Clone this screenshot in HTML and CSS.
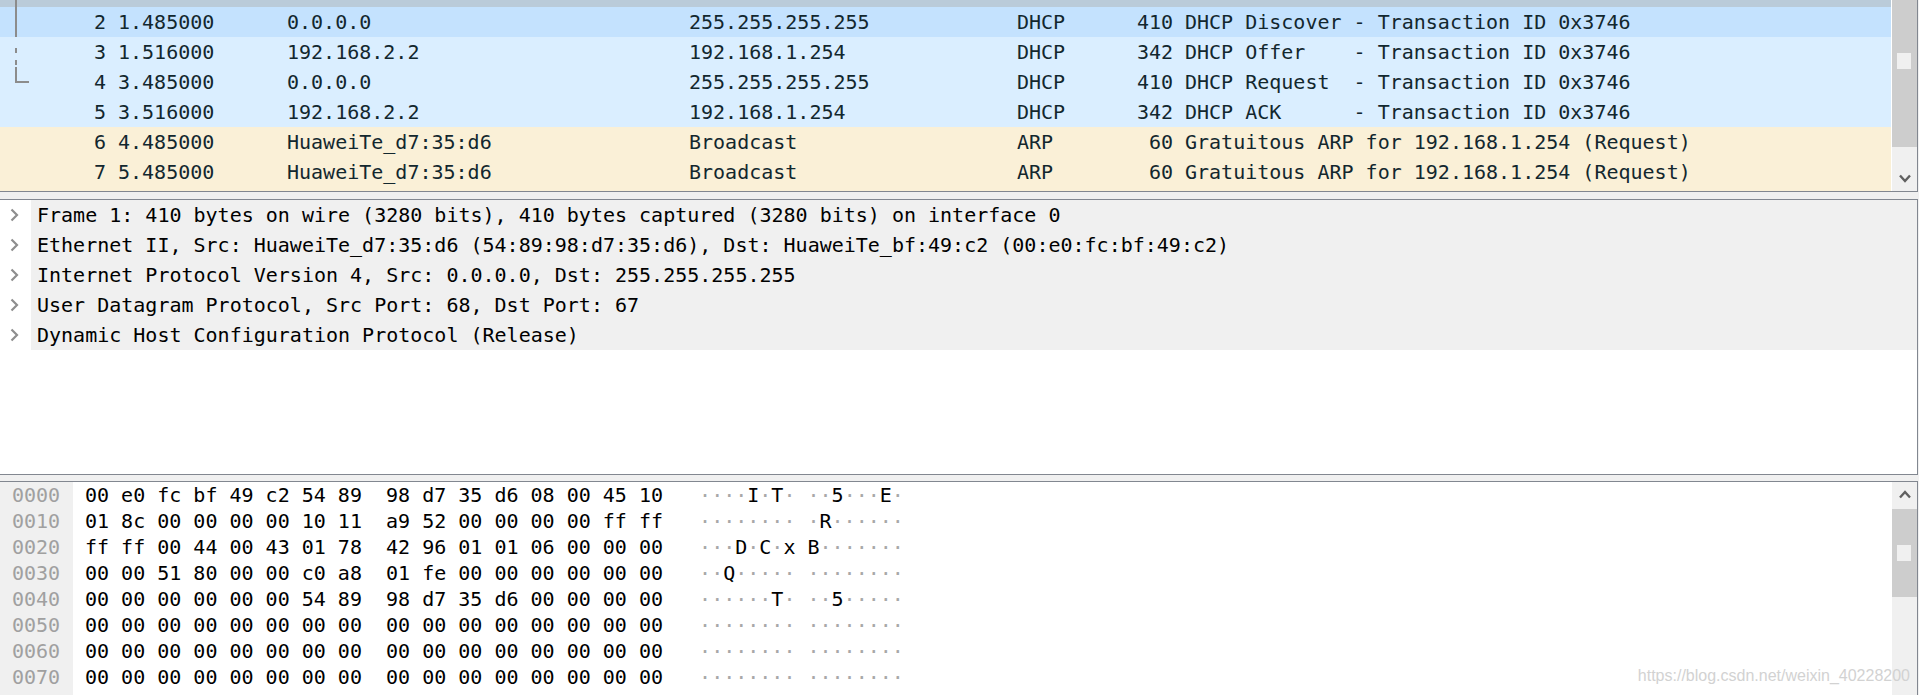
FILE: index.html
```html
<!DOCTYPE html>
<html lang="en">
<head>
    <meta charset="UTF-8">
    <title>Wireshark - DHCP</title>
    <link rel="stylesheet" href="styles.css">
</head>
<body>
    <div class="pane list">
        <div class="rows">
            <div class="strip"></div>
            <div class="row udp hover"><span class="no">2</span><span class="time">1.485000</span><span class="src">0.0.0.0</span><span class="dst">255.255.255.255</span><span class="proto">DHCP</span><span class="len">410</span><span class="info">DHCP Discover - Transaction ID 0x3746</span></div>
            <div class="row udp"><span class="no">3</span><span class="time">1.516000</span><span class="src">192.168.2.2</span><span class="dst">192.168.1.254</span><span class="proto">DHCP</span><span class="len">342</span><span class="info">DHCP Offer    - Transaction ID 0x3746</span></div>
            <div class="row udp"><span class="no">4</span><span class="time">3.485000</span><span class="src">0.0.0.0</span><span class="dst">255.255.255.255</span><span class="proto">DHCP</span><span class="len">410</span><span class="info">DHCP Request  - Transaction ID 0x3746</span></div>
            <div class="row udp"><span class="no">5</span><span class="time">3.516000</span><span class="src">192.168.2.2</span><span class="dst">192.168.1.254</span><span class="proto">DHCP</span><span class="len">342</span><span class="info">DHCP ACK      - Transaction ID 0x3746</span></div>
            <div class="row arp"><span class="no">6</span><span class="time">4.485000</span><span class="src">HuaweiTe_d7:35:d6</span><span class="dst">Broadcast</span><span class="proto">ARP</span><span class="len">60</span><span class="info">Gratuitous ARP for 192.168.1.254 (Request)</span></div>
            <div class="row arp"><span class="no">7</span><span class="time">5.485000</span><span class="src">HuaweiTe_d7:35:d6</span><span class="dst">Broadcast</span><span class="proto">ARP</span><span class="len">60</span><span class="info">Gratuitous ARP for 192.168.1.254 (Request)</span></div>
            <div class="fill"></div>
        </div>
        <div class="vscroll">
            <div class="thumb big"><div class="grip"></div></div>
            <div class="track">
                <svg class="arrow" width="12" height="9" viewBox="0 0 12 9"><polyline points="1,1.5 6,7 11,1.5" fill="none" stroke="#606060" stroke-width="2.4"/></svg>
            </div>
        </div>
        <!-- related packet marks -->
        <svg class="related" width="32" height="90" viewBox="0 0 32 90">
            <rect x="15" y="0" width="2" height="37" fill="#8c8c8c"/>
            <rect x="15" y="48" width="2" height="5" fill="#8c8c8c"/>
            <rect x="15" y="60" width="2" height="5" fill="#8c8c8c"/>
            <rect x="15" y="67" width="2" height="16" fill="#8c8c8c"/>
            <rect x="15" y="81" width="14" height="2" fill="#8c8c8c"/>
        </svg>
    </div>

    <div class="pane detail">
        <div class="tree-row"><span class="twisty"><svg width="9" height="14" viewBox="0 0 9 14"><polyline points="1.5,1.5 7,7 1.5,12.5" fill="none" stroke="#8e8e8e" stroke-width="2.2"/></svg></span><span class="label">Frame 1: 410 bytes on wire (3280 bits), 410 bytes captured (3280 bits) on interface 0</span></div>
        <div class="tree-row"><span class="twisty"><svg width="9" height="14" viewBox="0 0 9 14"><polyline points="1.5,1.5 7,7 1.5,12.5" fill="none" stroke="#8e8e8e" stroke-width="2.2"/></svg></span><span class="label">Ethernet II, Src: HuaweiTe_d7:35:d6 (54:89:98:d7:35:d6), Dst: HuaweiTe_bf:49:c2 (00:e0:fc:bf:49:c2)</span></div>
        <div class="tree-row"><span class="twisty"><svg width="9" height="14" viewBox="0 0 9 14"><polyline points="1.5,1.5 7,7 1.5,12.5" fill="none" stroke="#8e8e8e" stroke-width="2.2"/></svg></span><span class="label">Internet Protocol Version 4, Src: 0.0.0.0, Dst: 255.255.255.255</span></div>
        <div class="tree-row"><span class="twisty"><svg width="9" height="14" viewBox="0 0 9 14"><polyline points="1.5,1.5 7,7 1.5,12.5" fill="none" stroke="#8e8e8e" stroke-width="2.2"/></svg></span><span class="label">User Datagram Protocol, Src Port: 68, Dst Port: 67</span></div>
        <div class="tree-row"><span class="twisty"><svg width="9" height="14" viewBox="0 0 9 14"><polyline points="1.5,1.5 7,7 1.5,12.5" fill="none" stroke="#8e8e8e" stroke-width="2.2"/></svg></span><span class="label">Dynamic Host Configuration Protocol (Release)</span></div>
    </div>

    <div class="pane hex">
        <div class="offsets">
            <div class="hexrow">0000</div>
            <div class="hexrow">0010</div>
            <div class="hexrow">0020</div>
            <div class="hexrow">0030</div>
            <div class="hexrow">0040</div>
            <div class="hexrow">0050</div>
            <div class="hexrow">0060</div>
            <div class="hexrow">0070</div>
        </div>
        <div class="bytes">
            <div class="hexrow">00 e0 fc bf 49 c2 54 89  98 d7 35 d6 08 00 45 10   <span class="ascii">····<b>I</b>·<b>T</b>· ··<b>5</b>···<b>E</b>·</span></div>
            <div class="hexrow">01 8c 00 00 00 00 10 11  a9 52 00 00 00 00 ff ff   <span class="ascii">········ ·<b>R</b>······</span></div>
            <div class="hexrow">ff ff 00 44 00 43 01 78  42 96 01 01 06 00 00 00   <span class="ascii">···<b>D</b>·<b>C</b>·<b>x</b> <b>B</b>·······</span></div>
            <div class="hexrow">00 00 51 80 00 00 c0 a8  01 fe 00 00 00 00 00 00   <span class="ascii">··<b>Q</b>····· ········</span></div>
            <div class="hexrow">00 00 00 00 00 00 54 89  98 d7 35 d6 00 00 00 00   <span class="ascii">······<b>T</b>· ··<b>5</b>·····</span></div>
            <div class="hexrow">00 00 00 00 00 00 00 00  00 00 00 00 00 00 00 00   <span class="ascii">········ ········</span></div>
            <div class="hexrow">00 00 00 00 00 00 00 00  00 00 00 00 00 00 00 00   <span class="ascii">········ ········</span></div>
            <div class="hexrow">00 00 00 00 00 00 00 00  00 00 00 00 00 00 00 00   <span class="ascii">········ ········</span></div>
        </div>
        <div class="vscroll light">
            <div class="btn">
                <svg class="arrow" width="12" height="9" viewBox="0 0 12 9"><polyline points="1,7.5 6,2 11,7.5" fill="none" stroke="#606060" stroke-width="2.4"/></svg>
            </div>
            <div class="thumb small"><div class="grip"></div></div>
        </div>
    </div>

    <div class="watermark">https://blog.csdn.net/weixin_40228200</div>
</body>
</html>
```

FILE: styles.css
```css
body {
    margin: 0;
    height: 695px;
    overflow: hidden;
    position: relative;
    background-color: #f0f0f0;
    font-family: "DejaVu Sans Mono", "Liberation Mono", monospace;
    font-size: 20px;
    color: #000;
}
.pane {
    width: 1917px;
    border: 1px solid #828790;
    border-left: none;
    background: #fff;
}

/* packet list */
.list {
    border-top: none;
    height: 191px;
    display: flex;
    position: relative;
    margin-bottom: 7px;
}
.rows {
    width: 1891px;
    display: flex;
    flex-direction: column;
    overflow: hidden;
}
.strip {
    height: 7px;
    flex: none;
    background-color: #bacbd9;
}
.row {
    display: flex;
    flex: none;
    height: 30px;
    line-height: 30px;
    white-space: pre;
    color: #12272e;
}
.udp {
    background-color: #daeeff;
}
.udp.hover {
    background-color: #c4e2fe;
}
.arp {
    background-color: #faf0d7;
}
.fill {
    flex: 1;
    background-color: #faf0d7;
}
.no {
    width: 106px;
    text-align: right;
}
.time {
    width: 169px;
    margin-left: 12px;
}
.src {
    width: 402px;
}
.dst {
    width: 328px;
}
.proto {
    width: 83px;
}
.len {
    width: 73px;
    text-align: right;
}
.info {
    margin-left: 12px;
}
.related {
    position: absolute;
    left: 0;
    top: 0;
}

/* scrollbars */
.vscroll {
    width: 25px;
    margin-left: 1px;
    display: flex;
    flex-direction: column;
    background-color: #f0f0f0;
}
.thumb {
    background-color: #cdcdcd;
}
.thumb.big {
    height: 147px;
    padding-top: 53px;
    box-sizing: border-box;
}
.thumb.small {
    height: 88px;
    margin-top: 2px;
    padding-top: 36px;
    box-sizing: border-box;
}
.grip {
    width: 14px;
    height: 16px;
    margin-left: 5px;
    background-color: #f0f0f0;
}
.track {
    flex: 1;
    display: flex;
    align-items: flex-end;
    justify-content: center;
    padding-bottom: 8px;
}
.btn {
    height: 25px;
    display: flex;
    align-items: center;
    justify-content: center;
}
.vscroll.light {
    margin-left: 0;
}

/* packet details */
.detail {
    height: 274px;
    margin-bottom: 6px;
}
.tree-row {
    display: flex;
    height: 30px;
    line-height: 30px;
}
.twisty {
    width: 31px;
    padding-left: 10px;
    box-sizing: border-box;
    display: flex;
    align-items: center;
}
.label {
    flex: 1;
    padding-left: 6px;
    white-space: pre;
    background-color: #f0f0f0;
}

/* bytes */
.hex {
    height: 213px;
    border-bottom: none;
    display: flex;
    overflow: hidden;
}
.offsets {
    width: 73px;
    padding-left: 12px;
    box-sizing: border-box;
    background-color: #f0f0f0;
    color: #a0a0a0;
}
.bytes {
    flex: 1;
    padding-left: 12px;
}
.hexrow {
    height: 26px;
    line-height: 26px;
    white-space: pre;
}
.ascii {
    color: #a8a8a8;
}
.ascii b {
    font-weight: normal;
    color: #000;
}
.watermark {
    position: absolute;
    right: 9px;
    top: 667px;
    font-family: "Liberation Sans", Arial, sans-serif;
    font-size: 16px;
    line-height: 18px;
    color: #d2d2d2;
}
```
